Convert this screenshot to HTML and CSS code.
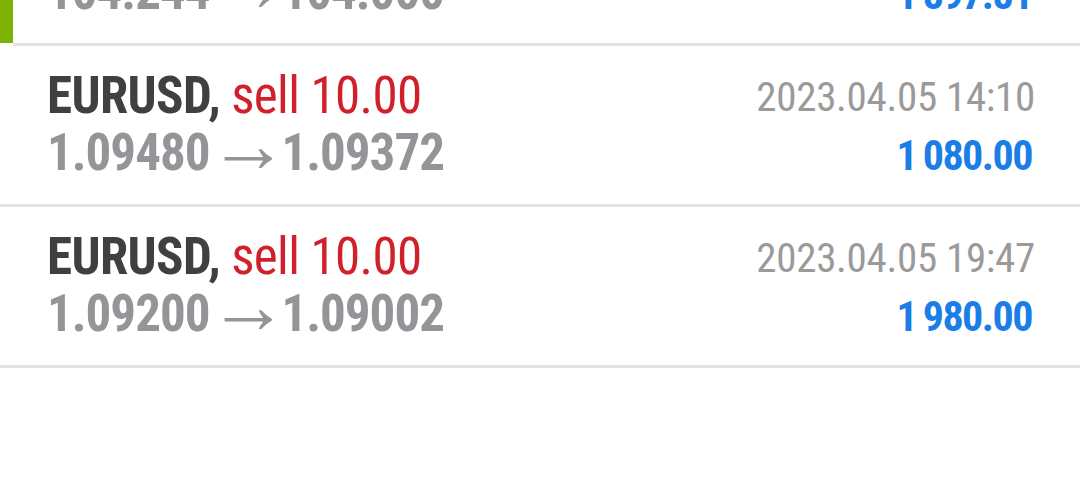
FILE: index.html
```html
<!DOCTYPE html>
<html>
  <head>
    <title>History - Deals</title>
    <link rel="stylesheet" href="styles.css">
  </head>
  <body>

	<ul id="deals">
		<li class="deal active">
			<div class="deal-body">
				<div class="deal-left">
					<div class="deal-title"><b>USDJPY,</b> <span class="sell">sell 10.00</span></div>
					<div class="deal-price">104.244<span class="arrow">&rarr;</span>104.000</div>
				</div>
				<div class="deal-right">
					<div class="deal-time">2023.04.04 09:32</div>
					<div class="deal-profit">1&#8201;897.81</div>
				</div>
			</div>
		</li>
		<li class="deal">
			<div class="deal-body">
				<div class="deal-left">
					<div class="deal-title"><b>EURUSD,</b> <span class="sell">sell 10.00</span></div>
					<div class="deal-price">1.09480<span class="arrow">&rarr;</span>1.09372</div>
				</div>
				<div class="deal-right">
					<div class="deal-time">2023.04.05 14:10</div>
					<div class="deal-profit">1&#8201;080.00</div>
				</div>
			</div>
		</li>
		<li class="deal">
			<div class="deal-body">
				<div class="deal-left">
					<div class="deal-title"><b>EURUSD,</b> <span class="sell">sell 10.00</span></div>
					<div class="deal-price">1.09200<span class="arrow">&rarr;</span>1.09002</div>
				</div>
				<div class="deal-right">
					<div class="deal-time">2023.04.05 19:47</div>
					<div class="deal-profit">1&#8201;980.00</div>
				</div>
			</div>
		</li>
	</ul>

  </body>
</html>
```
FILE: styles.css
```css
body { margin: 0; background: #fff; overflow: hidden; font-family: "Roboto Condensed", Roboto, "Liberation Sans", sans-serif; font-stretch: condensed; }

#deals { list-style-type: none; margin: -115px 0 0 0; padding: 0; }

.deal { display: flex; }
.deal.active::before { content: ''; width: 13px; background: #7cb305; margin-bottom: 3px; }
.deal-body { flex-grow: 1; display: flex; justify-content: space-between; box-sizing: border-box; height: 161px; padding: 21px 47px 0 47px; border-bottom: 3px solid #e4e4e4; }
.deal.active .deal-body { padding-left: 34px; }

.deal-left, .deal-right { line-height: 57px; white-space: nowrap; }
.deal-right { text-align: right; }

.deal-title { font-size: 51px; letter-spacing: -0.6px; color: #d0202a; }
.deal-title b { color: #404040; font-weight: 700; }
.deal-price { font-size: 51px; letter-spacing: -1px; font-weight: 700; color: #939598; }
.arrow { display: inline-block; font-size: 80px; font-weight: 400; line-height: 0; letter-spacing: 0; margin: 0 -7px 0 -1px; vertical-align: -2px; }

.deal-time { font-size: 41px; letter-spacing: -0.3px; color: #9a9a9a; padding-top: 2px; margin-right: -2px; }
.deal-profit { font-size: 42px; letter-spacing: -1.5px; font-weight: 700; color: #1a7ee6; margin-top: 1px; margin-right: 1px; }
```
